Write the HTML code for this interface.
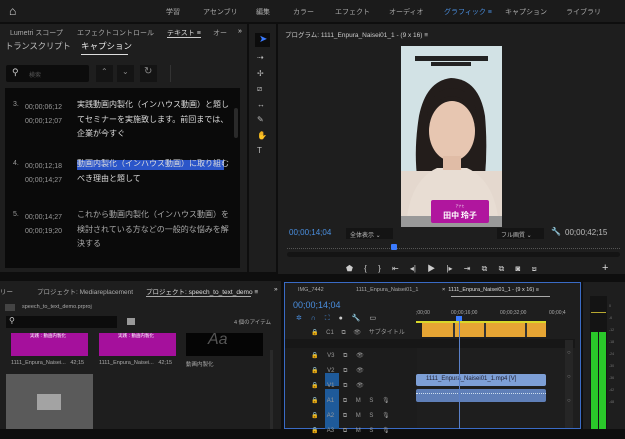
<!DOCTYPE html><html><head><meta charset="utf-8"><style>
*{margin:0;padding:0;box-sizing:border-box}
body{width:625px;height:429px;overflow:hidden;background:#0e0e0e;font-family:"Liberation Sans","Noto Sans CJK JP",sans-serif;color:#aaa;position:relative}
.a{position:absolute;white-space:nowrap}
.p{position:absolute;background:#1e1e1e}
.s{font-size:7px}
</style></head><body>
<!-- top bar -->
<div class="p" style="left:0;top:0;width:625px;height:22px;background:#1b1b1b"></div>
<div class="a" style="left:9px;top:4px;font-size:12px;color:#ddd">⌂</div>
<div class="a s" style="left:166px;top:7px">学習</div>
<div class="a s" style="left:203px;top:7px">アセンブリ</div>
<div class="a s" style="left:256px;top:7px">編集</div>
<div class="a s" style="left:293px;top:7px">カラー</div>
<div class="a s" style="left:335px;top:7px">エフェクト</div>
<div class="a s" style="left:389px;top:7px">オーディオ</div>
<div class="a s" style="left:444px;top:7px;color:#4a8fe0">グラフィック ≡</div>
<div class="a s" style="left:505px;top:7px">キャプション</div>
<div class="a s" style="left:566px;top:7px">ライブラリ</div>
<!-- left panel -->
<div class="p" style="left:0;top:24px;width:247px;height:248px"></div>
<div class="a s" style="left:10px;top:28px">Lumetri スコープ</div>
<div class="a s" style="left:77px;top:28px">エフェクトコントロール</div>
<div class="a s" style="left:167px;top:28px;color:#ddd">テキスト ≡</div>
<div class="a" style="left:167px;top:37px;width:34px;height:1px;background:#ccc"></div>
<div class="a s" style="left:213px;top:28px">オー</div>
<div class="a s" style="left:238px;top:28px;color:#ddd">»</div>
<div class="a" style="left:5px;top:40px;font-size:8.5px;color:#bbb;letter-spacing:-0.3px">トランスクリプト</div>
<div class="a" style="left:81px;top:40px;font-size:8.5px;color:#eee">キャプション</div>
<div class="a" style="left:81px;top:54px;width:47px;height:1px;background:#ddd"></div>
<div class="a" style="left:6px;top:65px;width:83px;height:17px;background:#0c0c0c;border-radius:2px"></div>
<div class="a" style="left:12px;top:67px;font-size:9px;color:#ccc">⚲</div>
<div class="a" style="left:29px;top:70px;font-size:6px;color:#555">検索</div>
<div class="a" style="left:96px;top:65px;width:17px;height:17px;background:#141414"></div>
<div class="a" style="left:117px;top:65px;width:17px;height:17px;background:#141414"></div>
<div class="a" style="left:140px;top:65px;width:17px;height:17px;background:#141414"></div>
<div class="a" style="left:101px;top:67px;font-size:8px;color:#888">⌃</div>
<div class="a" style="left:122px;top:67px;font-size:8px;color:#888">⌄</div>
<div class="a" style="left:144px;top:66px;font-size:10px;color:#888">↻</div>
<div class="a" style="left:170px;top:65px;width:1px;height:17px;background:#333"></div>
<div class="a" style="left:5px;top:88px;width:235px;height:180px;background:#0a0a0a"></div>
<div class="a" style="left:234px;top:108px;width:4px;height:30px;background:#2a2a2a;border-radius:2px"></div>
<div class="a s" style="left:13px;top:101px;color:#999">3.</div>
<div class="a s" style="left:25px;top:101px;color:#999;line-height:14px">00;00;06;12<br>00;00;12;07</div>
<div class="a" style="left:77px;top:98px;font-size:8px;color:#ddd;line-height:14.5px">実践動画内製化（インハウス動画）と題し<br>てセミナーを実施致します。前回までは、<br>企業が今すぐ</div>
<div class="a s" style="left:13px;top:160px;color:#999">4.</div>
<div class="a s" style="left:25px;top:160px;color:#999;line-height:14px">00;00;12;18<br>00;00;14;27</div>
<div class="a" style="left:77px;top:160px;width:147px;height:10px;background:#2b55c9"></div>
<div class="a" style="left:77px;top:157px;font-size:8px;color:#ddd;line-height:14.5px">動画内製化（インハウス動画）に取り組む<br>べき理由と題して</div>
<div class="a s" style="left:13px;top:211px;color:#999">5.</div>
<div class="a s" style="left:25px;top:211px;color:#999;line-height:14px">00;00;14;27<br>00;00;19;20</div>
<div class="a" style="left:77px;top:208px;font-size:8px;color:#aaa;line-height:14.5px">これから動画内製化（インハウス動画）を<br>検討されている方などの一般的な悩みを解<br>決する</div>
<!-- tools -->
<div class="p" style="left:249px;top:24px;width:27px;height:248px"></div>
<div class="a" style="left:255px;top:33px;width:15px;height:14px;background:#0c0c0c"></div>
<div class="a" style="left:259px;top:34px;font-size:10px;color:#3b7bff">➤</div>
<div class="a" style="left:257px;top:50px;font-size:8px;color:#bbb;line-height:15.5px">⇢<br>✢<br>⧄<br>↔<br>✎<br>✋<br>T</div>
<!-- program monitor -->
<div class="p" style="left:278px;top:24px;width:347px;height:250px"></div>
<div class="a" style="left:285px;top:29px;font-size:6.5px;color:#ccc">プログラム: 1111_Enpura_Naisei01_1 - (9 x 16) ≡</div>
<svg class="a" style="left:401px;top:46px" width="101" height="181" viewBox="0 0 101 181">
<rect width="101" height="181" fill="#d2e2e5"/>
<rect x="14" y="10" width="73" height="5" fill="#222"/><rect x="30" y="16" width="40" height="4" fill="#222"/>
<path d="M22 160 Q10 120 18 70 Q25 35 50 32 Q78 33 84 70 Q88 115 80 160Z" fill="#231d1b"/>
<rect x="0" y="125" width="101" height="50" fill="#e4d8ce"/>
<path d="M5 181 Q8 135 36 122 L66 122 Q95 135 98 181Z" fill="#e8ddd3"/>
<ellipse cx="51" cy="85" rx="23" ry="30" fill="#e7c6b1"/>
<path d="M26 70 Q30 42 52 42 Q74 44 76 72 Q66 50 50 50 Q34 52 26 70Z" fill="#231d1b"/>
<rect x="42" y="110" width="18" height="14" fill="#e0bca6"/>
<rect x="0" y="170" width="101" height="11" fill="#999"/>
<rect x="30" y="154" width="58" height="23" rx="2" fill="#b0169e"/>
<text x="59" y="161" font-size="3" fill="#fff" text-anchor="middle">アナヒ</text>
<text x="59" y="172" font-size="8" font-weight="bold" fill="#fff" text-anchor="middle" font-family="Noto Sans CJK JP">田中 玲子</text>
</svg>
<div class="a" style="left:289px;top:228px;font-size:8px;color:#4a8fe0">00;00;14;04</div>
<div class="a" style="left:346px;top:228px;width:47px;height:11px;background:#141414;font-size:6px;padding:2px 4px;color:#bbb">全体表示 ⌄</div>
<div class="a" style="left:497px;top:228px;width:47px;height:11px;background:#141414;font-size:6px;padding:2px 4px;color:#bbb">フル画質 ⌄</div>
<div class="a" style="left:551px;top:227px;font-size:8px;color:#bbb">🔧</div>
<div class="a" style="left:565px;top:228px;font-size:8px;color:#bbb">00;00;42;15</div>
<div class="a" style="left:287px;top:245px;width:333px;height:4px;border-bottom:1px dotted #555"></div>
<div class="a" style="left:287px;top:252px;width:333px;height:5px;background:#141414;border-radius:3px"></div>
<div class="a" style="left:391px;top:244px;width:6px;height:6px;background:#3b7bff;border-radius:1px"></div>
<div class="a" style="left:346px;top:263px;font-size:8px;color:#ccc;word-spacing:9px">⬟ { } ⇤ ◂| ▶ |▸ ⇥ ⧉ ⧉ ◙ ⧈</div>
<div class="a" style="left:602px;top:262px;font-size:11px;color:#ddd">+</div>
<!-- project panel -->
<div class="p" style="left:0;top:281px;width:281px;height:148px"></div>
<div class="a" style="left:0;top:286px;font-size:6.5px">リー</div>
<div class="a" style="left:37px;top:286px;font-size:6.5px">プロジェクト: Mediareplacement</div>
<div class="a" style="left:146px;top:286px;font-size:6.5px;color:#ddd">プロジェクト: speech_to_text_demo ≡</div>
<div class="a" style="left:146px;top:296px;width:105px;height:1px;background:#aaa"></div>
<div class="a" style="left:274px;top:286px;font-size:6.5px;color:#ddd">»</div>
<div class="a" style="left:5px;top:304px;width:10px;height:7px;background:#444"></div>
<div class="a" style="left:22px;top:304px;font-size:5.5px">speech_to_text_demo.prproj</div>
<div class="a" style="left:6px;top:316px;width:111px;height:12px;background:#0c0c0c;font-size:8px;padding-left:3px;color:#ccc">⚲</div>
<div class="a" style="left:127px;top:318px;width:8px;height:7px;background:#999"></div>
<div class="a" style="left:234px;top:318px;font-size:5.5px">4 個のアイテム</div>
<div class="a" style="left:11px;top:333px;width:77px;height:23px;background:#a5109c"></div>
<div class="a" style="left:99px;top:333px;width:77px;height:23px;background:#a5109c"></div>
<div class="a" style="left:30px;top:333px;font-size:4.5px;color:#fff">実践：動画内製化</div>
<div class="a" style="left:118px;top:333px;font-size:4.5px;color:#fff">実践：動画内製化</div>
<div class="a" style="left:186px;top:333px;width:77px;height:23px;background:#050505;color:#555;font-size:16px;line-height:14px;padding-left:22px;font-style:italic">Aa</div>
<div class="a" style="left:11px;top:360px;font-size:5.5px">1111_Enpura_Naisei...&nbsp;&nbsp;&nbsp;42;15</div>
<div class="a" style="left:99px;top:360px;font-size:5.5px">1111_Enpura_Naisei...&nbsp;&nbsp;&nbsp;42;15</div>
<div class="a" style="left:186px;top:360px;font-size:5.5px">動画内製化</div>
<div class="a" style="left:6px;top:374px;width:87px;height:55px;background:#5a5a5a"></div>
<div class="a" style="left:37px;top:394px;width:24px;height:16px;background:#a3a3a3"></div>
<div class="a" style="left:270px;top:350px;width:3px;height:79px;background:#2a2a2a"></div>
<!-- timeline -->
<div class="p" style="left:284px;top:282px;width:297px;height:147px;border:1px solid #3a6bc5"></div>
<div class="a" style="left:298px;top:287px;font-size:5.5px">IMG_7442</div>
<div class="a" style="left:356px;top:287px;font-size:5.5px">1111_Enpura_Naisei01_1</div>
<div class="a" style="left:442px;top:287px;font-size:5.5px;color:#ddd">× &nbsp;1111_Enpura_Naisei01_1 - (9 x 16) ≡</div>
<div class="a" style="left:451px;top:296px;width:99px;height:1px;background:#aaa"></div>
<div class="a" style="left:293px;top:300px;font-size:9px;color:#4a8fe0">00;00;14;04</div>
<div class="a" style="left:296px;top:314px;font-size:7px;color:#ccc;word-spacing:7px"><span style="color:#4a8fe0">✲ ∩ ⛶</span> ● 🔧 ▭</div>
<div class="a" style="left:416px;top:310px;font-size:5px;color:#aaa">;00;00</div>
<div class="a" style="left:451px;top:310px;font-size:5px;color:#aaa">00;00;16;00</div>
<div class="a" style="left:500px;top:310px;font-size:5px;color:#aaa">00;00;32;00</div>
<div class="a" style="left:549px;top:310px;font-size:5px;color:#aaa">00;00;4</div>
<div class="a" style="left:416px;top:321px;width:130px;height:2px;background:#d8d82a"></div>
<div class="a" style="left:422px;top:323px;width:124px;height:14px;background:#e6a534"></div>
<div class="a" style="left:453px;top:323px;width:2px;height:14px;background:#333"></div>
<div class="a" style="left:484px;top:323px;width:2px;height:14px;background:#333"></div>
<div class="a" style="left:525px;top:323px;width:2px;height:14px;background:#333"></div>
<div class="a" style="left:311px;top:327px;font-size:6px;color:#999;word-spacing:6px">🔒 C1 ⧉ 👁 サブタイトル</div>
<div class="a" style="left:285px;top:339px;width:290px;height:9px;background:#171717"></div>
<div class="a" style="left:285px;top:348px;width:132px;height:80px;background:#1c1c1c"></div>
<div class="a" style="left:325px;top:373px;width:14px;height:13px;background:#1e5a9a"></div>
<div class="a" style="left:325px;top:389px;width:14px;height:40px;background:#1e5a9a"></div>
<div class="a" style="left:311px;top:349px;font-size:6px;color:#999;line-height:15px;word-spacing:7px">🔒 V3 ⧉ 👁<br>🔒 V2 ⧉ 👁<br>🔒 V1 ⧉ 👁<br>🔒 A1 ⧉ M S 🎙<br>🔒 A2 ⧉ M S 🎙<br>🔒 A3 ⧉ M S 🎙</div>
<div class="a" style="left:416px;top:374px;width:130px;height:12px;background:#7d9fd6;border-radius:2px;font-size:6px;color:#223;padding:2px 10px">1111_Enpura_Naisei01_1.mp4 [V]</div>
<div class="a" style="left:416px;top:389px;width:130px;height:13px;background:#5f7fb8;border-radius:2px"></div>
<div class="a" style="left:416px;top:393px;width:130px;height:2px;border-top:1px dotted #cde"></div>
<div class="a" style="left:565px;top:340px;width:8px;height:88px;background:#262626"></div>
<div class="a" style="left:567px;top:341px;font-size:6px;color:#888;line-height:24px">○<br>○<br>○</div>
<div class="a" style="left:459px;top:320px;width:1px;height:109px;background:#5a80c8"></div>
<div class="a" style="left:456px;top:316px;width:6px;height:5px;background:#3b7bff"></div>
<!-- meter -->
<div class="p" style="left:583px;top:282px;width:42px;height:147px"></div>
<div class="a" style="left:590px;top:296px;width:17px;height:133px;background:#141414"></div>
<div class="a" style="left:591px;top:332px;width:7px;height:97px;background:#2ac82a"></div>
<div class="a" style="left:599px;top:332px;width:7px;height:97px;background:#2ac82a"></div>
<div class="a" style="left:591px;top:312px;width:15px;height:1px;background:#b8a830"></div>
<div class="a" style="left:609px;top:300px;font-size:3.5px;color:#777;line-height:12px">0<br>-6<br>-12<br>-18<br>-24<br>-30<br>-36<br>-42<br>-48</div>
</body></html>
